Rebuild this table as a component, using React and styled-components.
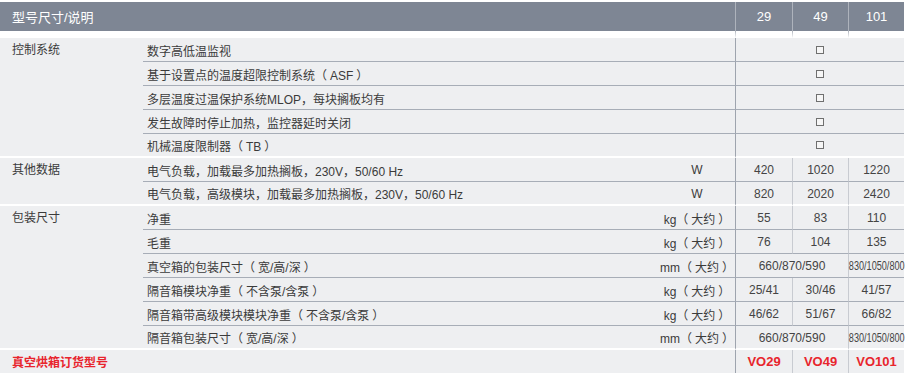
import React from "react";
import styled, { createGlobalStyle } from "styled-components";

// 型号对照表：29 / 49 / 101 三个规格
const sections = [
    {
        title: "控制系统",
        rows: [
            { desc: "数字高低温监视", check: true },
            { desc: "基于设置点的温度超限控制系统（ASF）", check: true },
            { desc: "多层温度过温保护系统MLOP，每块搁板均有", check: true },
            { desc: "发生故障时停止加热，监控器延时关闭", check: true },
            { desc: "机械温度限制器（TB）", check: true },
        ],
    },
    {
        title: "其他数据",
        rows: [
            { desc: "电气负载，加载最多加热搁板，230V，50/60 Hz", unit: "W", values: ["420", "1020", "1220"] },
            { desc: "电气负载，高级模块，加载最多加热搁板，230V，50/60 Hz", unit: "W", values: ["820", "2020", "2420"] },
        ],
    },
    {
        title: "包装尺寸",
        rows: [
            { desc: "净重", unit: "kg（大约）", values: ["55", "83", "110"] },
            { desc: "毛重", unit: "kg（大约）", values: ["76", "104", "135"] },
            { desc: "真空箱的包装尺寸（宽/高/深）", unit: "mm（大约）", pair: "660/870/590", last: "830/1050/800" },
            { desc: "隔音箱模块净重（不含泵/含泵）", unit: "kg（大约）", values: ["25/41", "30/46", "41/57"] },
            { desc: "隔音箱带高级模块模块净重（不含泵/含泵）", unit: "kg（大约）", values: ["46/62", "51/67", "66/82"] },
            { desc: "隔音箱包装尺寸（宽/高/深）", unit: "mm（大约）", pair: "660/870/590", last: "830/1050/800" },
        ],
    },
];

const models = ["29", "49", "101"];

// 全角括号在原图里居中排，补一点空隙
const spaced = (text) => (text ? text.replace(/（/g, "（\u2005").replace(/）/g, "\u2005）") : text);

const App = () => {
    return (
        <>
            <GlobalStyle />
            <Page>
                <Table>
                    <colgroup>
                        <col style={{ width: 143 }} />
                        <col style={{ width: 512 }} />
                        <col style={{ width: 80 }} />
                        <col style={{ width: 57 }} />
                        <col style={{ width: 56 }} />
                        <col style={{ width: 56 }} />
                    </colgroup>
                    <thead>
                        <tr>
                            <HeadCell colSpan={3}>型号尺寸/说明</HeadCell>
                            {models.map((m) => (
                                <HeadValue key={m}>{m}</HeadValue>
                            ))}
                        </tr>
                    </thead>
                    <tbody>
                        {sections.map((section) =>
                            section.rows.map((row, i) => {
                                const end = i === section.rows.length - 1;
                                return (
                                    <tr key={section.title + i}>
                                        {i === 0 && (
                                            <CatCell rowSpan={section.rows.length}>{section.title}</CatCell>
                                        )}
                                        <DescCell $end={end}>{spaced(row.desc)}</DescCell>
                                        <UnitCell $end={end}>{spaced(row.unit)}</UnitCell>
                                        {row.check && (
                                            <ValCell colSpan={3} $end={end} $first>
                                                <Check />
                                            </ValCell>
                                        )}
                                        {row.values &&
                                            row.values.map((v, k) => (
                                                <ValCell key={k} $end={end} $first={k === 0}>
                                                    {v}
                                                </ValCell>
                                            ))}
                                        {row.pair && (
                                            <>
                                                <ValCell colSpan={2} $end={end} $first>
                                                    {row.pair}
                                                </ValCell>
                                                <ValCell $end={end}>
                                                    <Narrow>{row.last}</Narrow>
                                                </ValCell>
                                            </>
                                        )}
                                    </tr>
                                );
                            })
                        )}
                        <tr>
                            <OrderCell colSpan={3}>真空烘箱订货型号</OrderCell>
                            {models.map((m, k) => (
                                <OrderValue key={m} $first={k === 0}>
                                    VO{m}
                                </OrderValue>
                            ))}
                        </tr>
                    </tbody>
                </Table>
            </Page>
        </>
    );
};

export default App;

const GlobalStyle = createGlobalStyle`
    html, body {
        margin: 0;
        padding: 0;
        background: #ffffff;
    }
    body {
        font-family: "Liberation Sans", "Noto Sans CJK SC", sans-serif;
        color: #3b3b3b;
    }
`;

const Page = styled.div`
    width: 910px;
    height: 380px;
    padding-top: 2px;
    box-sizing: border-box;
    overflow: hidden;
`;

const Table = styled.table`
    width: 904px;
    table-layout: fixed;
    border-collapse: separate;
    border-spacing: 0;
    font-size: 12px;
`;

const HeadCell = styled.th`
    height: 36px;
    box-sizing: border-box;
    padding: 0 0 0 12px;
    text-align: left;
    font-weight: normal;
    font-size: 13px;
    color: #ffffff;
    background: #7e8694;
    background-clip: padding-box;
    border-bottom: 7px solid #ffffff;
`;

const HeadValue = styled(HeadCell)`
    padding: 0;
    text-align: center;
    border-left: 1px solid #aeb3bc;
`;

const cellBase = `
    height: 24px;
    box-sizing: border-box;
    padding: 0;
    background: #eeeff1;
    background-clip: padding-box;
    vertical-align: middle;
    white-space: nowrap;
`;

const CatCell = styled.td`
    ${cellBase}
    vertical-align: top;
    padding-left: 12px;
    line-height: 24px;
    border-bottom: 2px solid #ffffff;
`;

const DescCell = styled.td`
    ${cellBase}
    padding-left: 4px;
    padding-top: 1px;
    border-bottom: ${(p) => (p.$end ? "2px solid #ffffff" : "1px solid #a7adb7")};
`;

const UnitCell = styled(DescCell)`
    padding-left: 4px;
    text-align: center;
`;

const ValCell = styled.td`
    ${cellBase}
    padding-top: 1px;
    text-align: center;
    color: #444444;
    border-left: 1px solid ${(p) => (p.$first ? "#9ea4ae" : "#c8cbd1")};
    border-bottom: ${(p) => (p.$end ? "2px solid #ffffff" : "1px solid #a7adb7")};
`;

const Check = styled.span`
    display: inline-block;
    width: 6px;
    height: 6px;
    border: 1px solid #6f6f6f;
    background: #f6f6f6;
    vertical-align: middle;
    margin-top: -2px;
`;

const Narrow = styled.span`
    display: inline-block;
    transform: scaleX(0.76);
    transform-origin: center;
    margin: 0 -10px;
`;

const OrderCell = styled.td`
    ${cellBase}
    height: 23px;
    padding-left: 12px;
    color: #e8252d;
    font-weight: bold;
`;

const OrderValue = styled.td`
    ${cellBase}
    height: 23px;
    text-align: center;
    color: #e8252d;
    font-weight: bold;
    font-size: 13px;
    border-left: 1px solid ${(p) => (p.$first ? "#9ea4ae" : "#c8cbd1")};
`;
